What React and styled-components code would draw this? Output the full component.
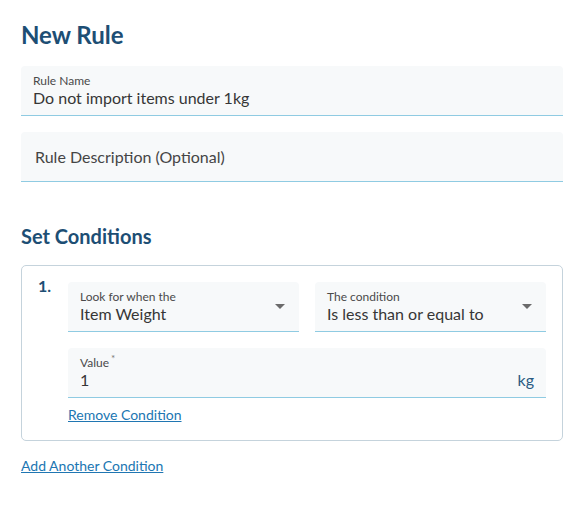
import { createGlobalStyle, styled } from 'styled-components';

const GlobalStyle = createGlobalStyle`
  body {
    margin: 0;
    background: #ffffff;
    font-family: Lato, "Noto Sans", sans-serif;
    color: #333;
  }
`;

const Page = styled.div`
  width: 542px;
  padding: 20px 0 0 21px;
`;

const Heading = styled.h2`
  margin: 0;
  font-size: ${(p) => p.$size || 24}px;
  line-height: ${(p) => (p.$size || 24) + 6}px;
  font-weight: 700;
  color: #1d4e74;
  margin-top: ${(p) => p.$top || 0}px;
`;

const Stack = styled.div`
  display: flex;
  flex-direction: column;
  gap: 16px;
  margin-top: 16px;
`;

const Field = styled.div`
  position: relative;
  box-sizing: border-box;
  height: 50px;
  padding: 7px 12px 0;
  background: #f7f9fa;
  border-bottom: 1px solid #8fcbe2;
  border-radius: 4px 4px 0 0;
  display: flex;
  flex-direction: column;
  justify-content: ${(p) => (p.$placeholder ? 'center' : 'flex-start')};
  padding-top: ${(p) => (p.$placeholder ? 0 : 7)}px;
  padding-right: ${(p) => (p.$select ? 36 : 12)}px;
`;

const Label = styled.div`
  font-size: 12px;
  line-height: 15px;
  color: #4a4a4a;

  sup {
    font-size: 10px;
    line-height: 0;
    margin-left: 2px;
    color: #777;
  }
`;

const Value = styled.div`
  font-size: 16px;
  line-height: 20px;
  color: #363636;
  white-space: nowrap;
`;

const Placeholder = styled.div`
  font-size: 16px;
  color: #454545;
  padding-left: 2px;
`;

const Caret = styled.span`
  position: absolute;
  right: 14px;
  top: 22px;
  width: 0;
  height: 0;
  border-left: 5px solid transparent;
  border-right: 5px solid transparent;
  border-top: 5px solid #6b6b6b;
`;

const Unit = styled.span`
  position: absolute;
  right: 12px;
  top: 22px;
  font-size: 16px;
  line-height: 20px;
  color: #2a5b82;
`;

const ConditionBox = styled.div`
  margin-top: 16px;
  box-sizing: border-box;
  border: 1px solid #c5d3dc;
  border-radius: 5px;
  padding: 16px;
  display: grid;
  grid-template-columns: 30px 1fr;
`;

const Index = styled.div`
  font-size: 16px;
  font-weight: 700;
  color: #1d4e74;
  line-height: 20px;
  margin-top: -6px;
`;

const ConditionBody = styled.div`
  display: flex;
  flex-direction: column;
  gap: 16px;
`;

const Row = styled.div`
  display: grid;
  grid-template-columns: 1fr 1fr;
  gap: 16px;
`;

const Link = styled.a`
  font-size: 14px;
  line-height: 18px;
  color: #2076b2;
  text-decoration: underline;
  cursor: pointer;
  align-self: flex-start;
  margin-top: ${(p) => p.$top || 0}px;
  display: inline-block;
`;

export default function App() {
  return (
    <>
      <GlobalStyle />
      <Page>
        <Heading>New Rule</Heading>
        <Stack>
          <Field>
            <Label>Rule Name</Label>
            <Value>Do not import items under 1kg</Value>
          </Field>
          <Field $placeholder>
            <Placeholder>Rule Description (Optional)</Placeholder>
          </Field>
        </Stack>

        <Heading $size={20} $top={41}>Set Conditions</Heading>
        <ConditionBox>
          <Index>1.</Index>
          <ConditionBody>
            <Row>
              <Field $select>
                <Label>Look for when the</Label>
                <Value>Item Weight</Value>
                <Caret />
              </Field>
              <Field $select>
                <Label>The condition</Label>
                <Value>Is less than or equal to</Value>
                <Caret />
              </Field>
            </Row>
            <Field>
              <Label>
                Value<sup>*</sup>
              </Label>
              <Value>1</Value>
              <Unit>kg</Unit>
            </Field>
            <Link $top={-8}>Remove Condition</Link>
          </ConditionBody>
        </ConditionBox>
        <Link $top={16}>Add Another Condition</Link>
      </Page>
    </>
  );
}
